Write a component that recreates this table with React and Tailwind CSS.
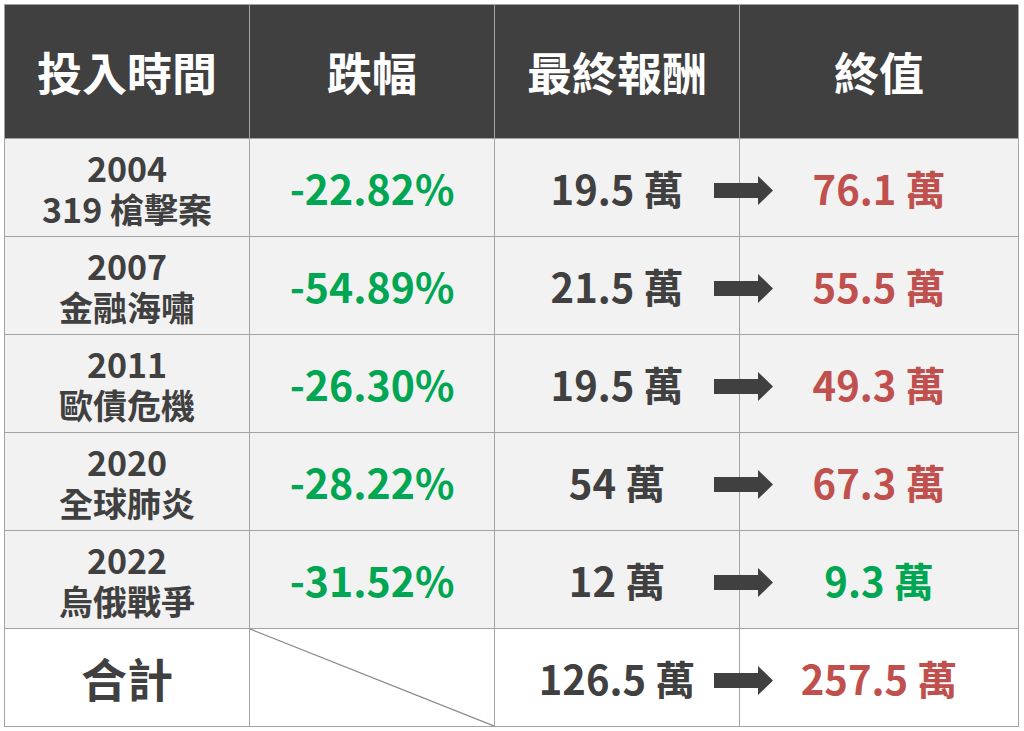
const rows = [
  { year: "2004", name: "319 槍擊案", drop: "-22.82%", ret: "19.5 萬", end: "76.1 萬", up: true },
  { year: "2007", name: "金融海嘯", drop: "-54.89%", ret: "21.5 萬", end: "55.5 萬", up: true },
  { year: "2011", name: "歐債危機", drop: "-26.30%", ret: "19.5 萬", end: "49.3 萬", up: true },
  { year: "2020", name: "全球肺炎", drop: "-28.22%", ret: "54 萬", end: "67.3 萬", up: true },
  { year: "2022", name: "烏俄戰爭", drop: "-31.52%", ret: "12 萬", end: "9.3 萬", up: false },
];

function Arrow() {
  return (
    <svg
      className="absolute left-[-26px] top-1/2 -translate-y-[12px]"
      width="60"
      height="30"
      viewBox="0 0 60 30"
    >
      <rect x="0" y="7" width="45" height="15" fill="#404040" />
      <polygon points="44,0 59,14.5 44,29" fill="#404040" />
    </svg>
  );
}

const cell = "flex items-center justify-center border-r border-b border-[#a3a3a3]";

export default function App() {
  return (
    <div className="w-[1024px] h-[731px] bg-white pt-[4px] pl-[4px] font-['Noto_Sans_CJK_TC','Noto_Sans',sans-serif] font-bold">
      <div className="grid grid-cols-[245px_245px_245px_279px] w-[1014px] border-l border-t border-[#a3a3a3]">
        {["投入時間", "跌幅", "最終報酬", "終值"].map((h) => (
          <div key={h} className={`${cell} h-[134px] bg-[#404040] text-white text-[45px]`}>
            {h}
          </div>
        ))}

        {rows.map((r) => (
          <div key={r.year} className="contents">
            <div className={`${cell} h-[98px] bg-[#f2f2f2] flex-col text-[#404040] text-[34px] leading-[41px]`}>
              <span>{r.year}</span>
              <span>{r.name}</span>
            </div>
            <div className={`${cell} h-[98px] bg-[#f2f2f2] text-[#00a651] text-[41px]`}>{r.drop}</div>
            <div className={`${cell} h-[98px] bg-[#f2f2f2] text-[#404040] text-[40px]`}>{r.ret}</div>
            <div className={`${cell} relative h-[98px] bg-[#f2f2f2] text-[40px] ${r.up ? "text-[#c0504d]" : "text-[#00a651]"}`}>
              <Arrow />
              <span>{r.end}</span>
            </div>
          </div>
        ))}

        <div className={`${cell} h-[98px] bg-white text-[#404040] text-[46px]`}>合計</div>
        <div className={`${cell} h-[98px] bg-white`}>
          <svg className="w-full h-full" viewBox="0 0 244 97" preserveAspectRatio="none">
            <line x1="0" y1="0" x2="244" y2="97" stroke="#8c8c8c" strokeWidth="1.3" />
          </svg>
        </div>
        <div className={`${cell} h-[98px] bg-white text-[#404040] text-[40px]`}>126.5 萬</div>
        <div className={`${cell} relative h-[98px] bg-white text-[#c0504d] text-[40px]`}>
          <Arrow />
          <span>257.5 萬</span>
        </div>
      </div>
    </div>
  );
}
